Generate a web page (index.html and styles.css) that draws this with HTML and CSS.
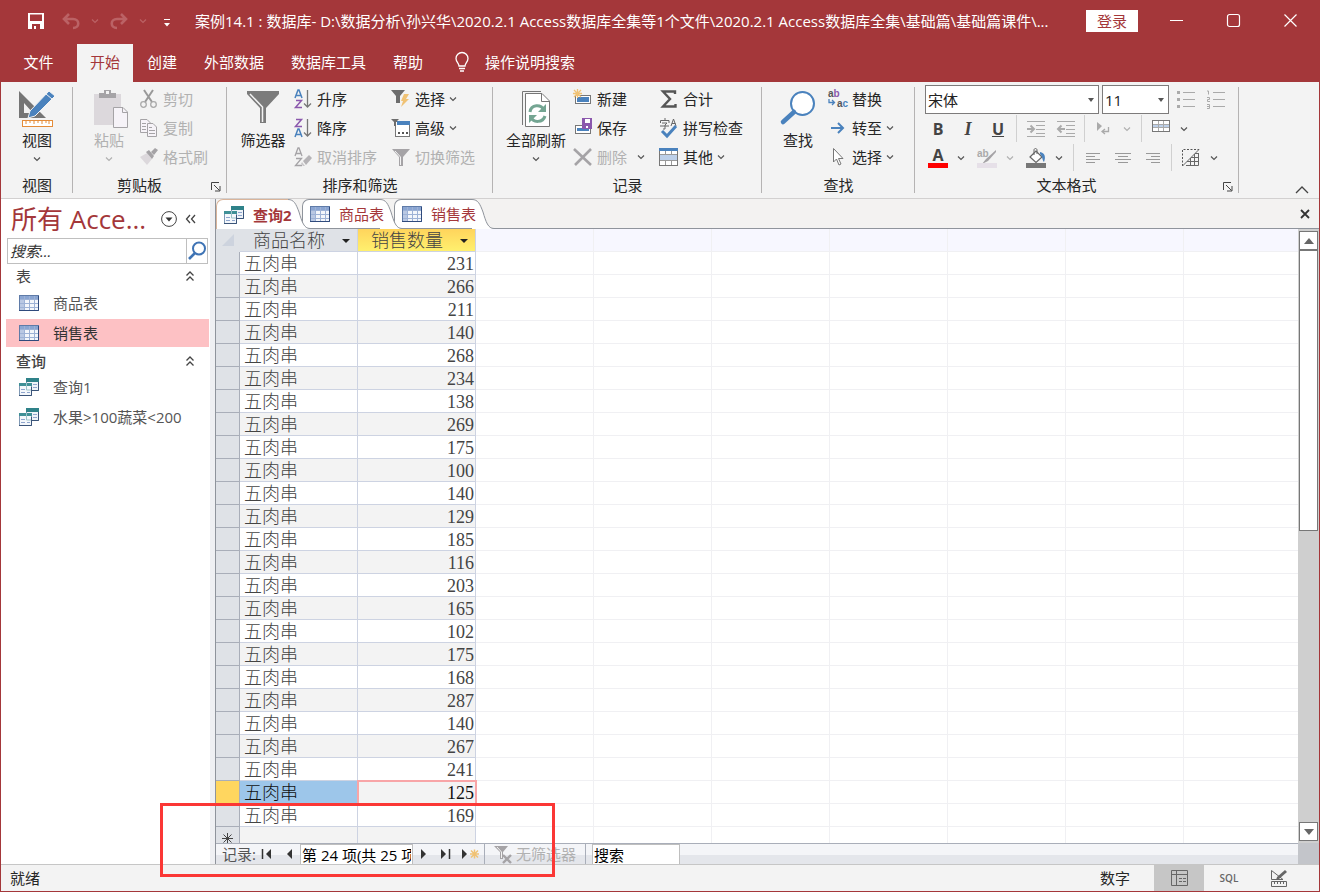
FILE: index.html
```html
<!DOCTYPE html>
<html lang="zh-CN">

<head>
    <meta charset="UTF-8">
    <title>Access</title>
    <link rel="stylesheet" href="styles.css">
</head>

<body>
    <svg class="defs" width="0" height="0">
        <symbol id="chev" viewBox="0 0 8 8">
            <path d="M1 2.5 L4 5.5 L7 2.5" fill="none" stroke="currentColor" stroke-width="1.2" />
        </symbol>
        <symbol id="table" viewBox="0 0 20 16">
            <rect x="0.5" y="0.5" width="19" height="15" fill="#f3f6fb" stroke="#5f7ba8" />
            <rect x="1" y="1" width="18" height="3" fill="#8aa5d2" />
            <path d="M1 4 H5 V15 H1 Z" fill="#b9c8e3" />
            <path d="M1 4.5 H19 M1 8.5 H19 M1 12.5 H19 M5.5 1 V15 M10.5 1 V15 M15.5 1 V15" stroke="#9db2d6" fill="none" />
            <path d="M19.5 1 V15.5 H0" stroke="#2f4a7c" fill="none" />
        </symbol>
        <symbol id="query" viewBox="0 0 20 18">
            <rect x="7.5" y="0.5" width="12" height="12" fill="#eef3f8" stroke="#7f99b5" />
            <rect x="7" y="0" width="13" height="4" fill="#2f8289" />
            <path d="M14 6.5 H18 M14 9.5 H18" stroke="#8ea5cd" />
            <path d="M19.5 4 V12.5 H13" stroke="#3a5479" fill="none" />
            <rect x="0.5" y="5.5" width="12" height="12" fill="#f4f7fb" stroke="#7f99b5" />
            <rect x="0" y="5" width="13" height="3" fill="#3f9096" />
            <path d="M7.5 5 V12 H13" stroke="#9cc4c9" fill="none" />
            <path d="M2 11.5 H6 M2 14.5 H6 M8 14.5 H11" stroke="#8ea5cd" />
            <path d="M12.5 9 V17.5 H0" stroke="#3a5479" fill="none" />
        </symbol>
        <symbol id="up2" viewBox="0 0 10 12">
            <path d="M1.5 5.5 L5 2 L8.5 5.5 M1.5 10.5 L5 7 L8.5 10.5" fill="none" stroke="#444" stroke-width="1.3" />
        </symbol>
        <symbol id="funnel" viewBox="0 0 20 20">
            <path d="M1 2 H19 L12 10 V19 H8 V10 Z" />
            <path d="M4 4 L9.5 10 V18" stroke="#f3f3f3" fill="none" />
        </symbol>
        <symbol id="launch" viewBox="0 0 10 10">
            <path d="M0.5 8 V0.5 H8 M3 3 L8.5 8.5 M9 4 V9 H4" fill="none" stroke="#444" />
        </symbol>
        <symbol id="slope" viewBox="0 0 22 30">
            <path d="M0 0.5 C6 0.5 8 5 11 13 C14 23 16 29.5 22 29.5 V30 H0 Z" fill="#fff" />
            <path d="M0 0.5 C6 0.5 8 5 11 13 C14 23 16 29.5 22 29.5" fill="none" stroke="#8f949c" />
        </symbol>
    </svg>

    <div class="titlebar">
        <button class="qa save" aria-label="保存"><svg width="16" height="16"><path d="M0 0 H16 V16 H0 Z M2 1.5 V8 H14 V1.5 Z M4 11 V16 H6 V13 H8 V16 H12 V11 Z" fill="#fff" fill-rule="evenodd" /></svg></button>
        <button class="qa dim" aria-label="撤消"><svg width="18" height="16"><path d="M7 1 L2 6 L7 11 M2 6 H11 C18 6 18 15 11 15" fill="none" stroke="currentColor" stroke-width="2.6" /></svg></button>
        <button class="qa dim drop" aria-label="撤消列表"><svg width="8" height="8"><use href="#chev" /></svg></button>
        <button class="qa dim" aria-label="恢复"><svg width="18" height="16"><path d="M11 1 L16 6 L11 11 M16 6 H7 C0 6 0 15 7 15" fill="none" stroke="currentColor" stroke-width="2.6" /></svg></button>
        <button class="qa dim drop" aria-label="恢复列表"><svg width="8" height="8"><use href="#chev" /></svg></button>
        <button class="qa more" aria-label="自定义"><svg width="6" height="8"><path d="M0 0.5 H6" stroke="#fff" /><path d="M0 4 H6 L3 7.5 Z" fill="#fff" /></svg></button>
        <div class="caption">案例14.1 : 数据库- D:\数据分析\孙兴华\2020.2.1 Access数据库全集等1个文件\2020.2.1 Access数据库全集\基础篇\基础篇课件\...</div>
        <button class="login">登录</button>
        <button class="win" aria-label="最小化"><svg width="13" height="13"><path d="M0 6.5 H13" stroke="#fff" /></svg></button>
        <button class="win" aria-label="最大化"><svg width="13" height="13"><rect x="0.5" y="0.5" width="12" height="12" rx="2" fill="none" stroke="#fff" stroke-width="1.2" /></svg></button>
        <button class="win" aria-label="关闭"><svg width="13" height="13"><path d="M0.5 0.5 L12.5 12.5 M12.5 0.5 L0.5 12.5" stroke="#fff" stroke-width="1.2" /></svg></button>
    </div>

    <div class="menu">
        <button class="file">文件</button>
        <button class="on">开始</button>
        <button>创建</button>
        <button>外部数据</button>
        <button>数据库工具</button>
        <button>帮助</button>
        <button class="tell"><svg width="14" height="20"><path d="M4 14 C4 11 1 10 1 6.5 A6 6 0 0 1 13 6.5 C13 10 10 11 10 14 Z M4 16.5 H10 M5 19 H9" fill="none" stroke="#fff" stroke-width="1.3" /></svg>操作说明搜索</button>
    </div>

    <div class="ribbon">
        <div class="group first">
            <div class="tools">
                <button class="big"><svg class="pic" width="38" height="38">
                        <path d="M1 1 V28 H28 Z M6 13 V23 H15 Z" fill="#757575" fill-rule="evenodd" />
                        <path d="M31 1 L37 6 L17 26 L10 28 L12 21 Z" fill="#4a82bd" stroke="#f3f3f3" />
                        <path d="M28 4 L34 9" stroke="#f3f3f3" />
                        <rect x="4.5" y="30.5" width="30" height="6" fill="#fff" stroke="#e48c39" />
                        <path d="M8 31 V34 M12 31 V33 M16 31 V34 M20 31 V33 M24 31 V34 M28 31 V33 M31 31 V34" stroke="#e48c39" />
                    </svg><span>视图</span><svg class="chev" width="8" height="8"><use href="#chev" /></svg></button>
            </div>
            <div class="name"><span>视图</span></div>
        </div>

        <div class="group">
            <div class="tools">
                <button class="big" disabled><svg class="pic" width="38" height="38">
                        <path d="M4 4 H31 V35 H4 Z" fill="#dcd8dc" />
                        <path d="M9 3 H14 V0 H21 V3 H26 V8 H9 Z M16 1 V4 H19 V1 Z" fill="#a5a3a6" fill-rule="evenodd" />
                        <path d="M23.5 17.5 H33 L37.5 22 V37.5 H23.5 Z" fill="#f6f3f8" stroke="#a5a3a6" />
                        <path d="M32.5 18 V22.5 H37" fill="none" stroke="#a5a3a6" />
                    </svg><span>粘贴</span><svg class="chev" width="8" height="8"><use href="#chev" /></svg></button>
                <div class="stack">
                    <button class="small" disabled><svg width="20" height="20">
                            <path d="M5 1 L13 13 M14 1 L6 13" stroke="#999" stroke-width="2" />
                            <circle cx="4.5" cy="15.5" r="2.8" fill="none" stroke="#aaa" stroke-width="1.3" />
                            <circle cx="14.5" cy="15.5" r="2.8" fill="none" stroke="#aaa" stroke-width="1.3" />
                        </svg>剪切</button>
                    <button class="small" disabled><svg width="20" height="20">
                            <path d="M1.5 1.5 H8 L11.5 5 V14.5 H1.5 Z" fill="#f6f3f8" stroke="#a5a3a6" />
                            <path d="M8.5 5.5 H14 L17.5 9 V18.5 H8.5 Z" fill="#f6f3f8" stroke="#a5a3a6" />
                            <path d="M3 5.5 H7 M3 8.5 H7 M3 11.5 H7 M10 9.5 H13 M10 12.5 H16 M10 15.5 H16" stroke="#a5a3a6" />
                        </svg>复制</button>
                    <button class="small" disabled><svg width="20" height="20">
                            <path d="M1 10 L8 6 L13 12 L8 18 Z" fill="#dcd8dc" />
                            <path d="M7 5 L10 3 L15 9 L13 12 Z M12 5 L16 1 L19 3 L15 8 Z" fill="#a5a3a6" />
                        </svg>格式刷</button>
                </div>
            </div>
            <div class="name"><span>剪贴板</span><button class="launch" aria-label="剪贴板选项"><svg width="10" height="10"><use href="#launch" /></svg></button></div>
        </div>

        <div class="group">
            <div class="tools">
                <button class="big"><svg class="pic" width="34" height="34">
                        <path d="M1 1 H33 V4 L20 18 V33 H14 V18 L1 4 Z" fill="#7b7b7b" />
                        <path d="M4 4 L16.5 17 V32" fill="none" stroke="#f3f3f3" stroke-width="1.5" />
                    </svg><span>筛选器</span></button>
                <div class="stack">
                    <button class="small"><svg width="20" height="20">
                            <path d="M2 9 L5 1 H6 L9 9 M3 6.5 H8" fill="none" stroke="#4a82bd" stroke-width="1.5" />
                            <path d="M3 11.5 H8.5 L2.5 18.5 H9" fill="none" stroke="#8b58ad" stroke-width="1.5" />
                            <path d="M14.5 1 V18 M11 14.5 L14.5 18 L18 14.5" fill="none" stroke="#777" stroke-width="1.3" />
                        </svg>升序</button>
                    <button class="small"><svg width="20" height="20">
                            <path d="M3 1.5 H8.5 L2.5 8.5 H9" fill="none" stroke="#8b58ad" stroke-width="1.5" />
                            <path d="M2 19 L5 11 H6 L9 19 M3 16.5 H8" fill="none" stroke="#4a82bd" stroke-width="1.5" />
                            <path d="M14.5 1 V18 M11 14.5 L14.5 18 L18 14.5" fill="none" stroke="#777" stroke-width="1.3" />
                        </svg>降序</button>
                    <button class="small" disabled><svg width="20" height="20">
                            <path d="M2 9 L5 1 H6 L9 9 M3 6.5 H8 M3 11.5 H8.5 L2.5 18.5 H9" fill="none" stroke="#a5a3a6" stroke-width="1.3" />
                            <path d="M10 14 L16 8 L19 11 L13 18 Z" fill="#b5b3b6" />
                            <path d="M9 15 L12 19 L10 19 L8 17 Z" fill="#c9c7ca" />
                        </svg>取消排序</button>
                </div>
                <div class="stack">
                    <button class="small"><svg width="20" height="20">
                            <path d="M0 1 H14 L9 7 V14 H5 V7 Z" fill="#6d6d6d" />
                            <path d="M13 5 H18 L15 10 H18 L10 18 L12 12 H10 Z" fill="#f0c274" />
                        </svg>选择<svg class="chev" width="8" height="8"><use href="#chev" /></svg></button>
                    <button class="small"><svg width="20" height="20">
                            <rect x="4.5" y="3.5" width="14" height="15" fill="#fff" stroke="#777" />
                            <rect x="6" y="3" width="13" height="4" fill="#4a82bd" />
                            <path d="M0 1 H8 L5 4 V8 H3 V4 Z" fill="#6d6d6d" />
                            <path d="M7 15 H9 M11 15 H13 M15 15 H17" stroke="#555" stroke-width="2" />
                        </svg>高级<svg class="chev" width="8" height="8"><use href="#chev" /></svg></button>
                    <button class="small" disabled><svg width="20" height="20" fill="#a5a3a6"><use href="#funnel" /></svg>切换筛选</button>
                </div>
            </div>
            <div class="name"><span>排序和筛选</span></div>
        </div>

        <div class="group">
            <div class="tools">
                <button class="big wide"><svg class="pic" width="30" height="38">
                        <path d="M1.5 35 V1.5 H20" fill="none" stroke="#777" />
                        <path d="M4.5 3.5 H21 L28.5 11 V36.5 H4.5 Z" fill="#fff" stroke="#777" />
                        <path d="M20.5 4 V11.5 H28" fill="none" stroke="#777" />
                        <path d="M9 22 C10 14 20 14 23 20 M24 26 C22 33 12 33 10 27" fill="none" stroke="#74a592" stroke-width="3" />
                        <path d="M25 14 V22 H17 Z M8 33 V25 H16 Z" fill="#74a592" />
                    </svg><span>全部刷新</span><svg class="chev" width="8" height="8"><use href="#chev" /></svg></button>
                <div class="stack records">
                    <button class="small"><svg width="20" height="20">
                            <rect x="2.5" y="6.5" width="15" height="8" fill="#fff" stroke="#777" />
                            <rect x="4" y="8" width="12" height="5" fill="#4a82bd" />
                            <path d="M4.5 0 V9 M0 4.5 H9 M1 1 L8 8 M8 1 L1 8" stroke="#f0c274" stroke-width="1.3" />
                        </svg>新建</button>
                    <button class="small"><svg width="20" height="20">
                            <rect x="2.5" y="7.5" width="15" height="8" fill="#fff" stroke="#777" />
                            <rect x="4" y="10" width="12" height="3" fill="#4a82bd" />
                            <path d="M9 0 H19 V11 H9 Z" fill="#8b58ad" />
                            <path d="M12 1 H17 V5 H12 Z M13 8 H15 V10 H13 Z" fill="#fff" />
                        </svg>保存</button>
                    <button class="small" disabled><svg width="20" height="20">
                            <path d="M1 2 L18 18 M18 2 L2 18" stroke="#a5a3a6" stroke-width="2.6" />
                        </svg>删除<svg class="chev dark" width="8" height="8"><use href="#chev" /></svg></button>
                </div>
                <div class="stack">
                    <button class="small"><svg width="20" height="20">
                            <path d="M16 5 V2.5 H4 L11 10 L4 17.5 H16.5 V15" fill="none" stroke="#555" stroke-width="2.4" />
                        </svg>合计</button>
                    <button class="small"><svg width="20" height="20">
                            <path d="M6 0 V2 M1.5 5 V2.5 H10 V5 M3 5 H8 L6 7 V11 H4 M1 8 H10 M12 8 L14.5 1 L17 8 M13 5.5 H16.5" fill="none" stroke="#666" />
                            <path d="M3 13 L8 18 L17 8" fill="none" stroke="#4a82bd" stroke-width="3" />
                        </svg>拼写检查</button>
                    <button class="small"><svg width="20" height="20">
                            <rect x="0.5" y="1.5" width="18" height="17" fill="#fff" stroke="#777" />
                            <rect x="0" y="1" width="19" height="3" fill="#4a82bd" />
                            <rect x="1" y="8" width="17" height="6" fill="#bdd0e9" />
                            <path d="M1 7.5 H18 M1 13.5 H18 M6.5 4 V8 M12.5 4 V8 M6.5 14 V18 M12.5 14 V18" stroke="#999" />
                        </svg>其他<svg class="chev" width="8" height="8"><use href="#chev" /></svg></button>
                </div>
            </div>
            <div class="name"><span>记录</span></div>
        </div>

        <div class="group">
            <div class="tools">
                <button class="big"><svg class="pic" width="36" height="36">
                        <circle cx="22.5" cy="13.5" r="11.5" fill="#fff" stroke="#4a82bd" stroke-width="2" />
                        <path d="M14 22 L3 32" stroke="#4a82bd" stroke-width="4.5" stroke-linecap="round" />
                    </svg><span>查找</span></button>
                <div class="stack">
                    <button class="small"><svg width="20" height="20">
                            <text x="0" y="8" class="abc">a<tspan fill="#8b58ad">b</tspan></text>
                            <text x="9" y="18" class="abc">a<tspan fill="#4a82bd">c</tspan></text>
                            <path d="M1 10 V13.5 H6 M4 11 L6.5 13.5 L4 16" fill="none" stroke="#4a82bd" stroke-width="1.3" />
                        </svg>替换</button>
                    <button class="small"><svg width="20" height="20">
                            <path d="M3 10 H15 M10 5 L15 10 L10 15" fill="none" stroke="#4a82bd" stroke-width="2" />
                        </svg>转至<svg class="chev" width="8" height="8"><use href="#chev" /></svg></button>
                    <button class="small"><svg width="20" height="20">
                            <path d="M5.5 1.5 V15 L8.5 12 L11 18 L13 17 L10.5 11.5 H15 Z" fill="#fff" stroke="#777" />
                        </svg>选择<svg class="chev" width="8" height="8"><use href="#chev" /></svg></button>
                </div>
            </div>
            <div class="name"><span>查找</span></div>
        </div>

        <div class="group format">
            <div class="tools">
                <div class="line fonts">
                    <label class="pick face"><select aria-label="字体"><option>宋体</option></select></label>
                    <label class="pick size"><select aria-label="字号"><option>11</option></select></label>
                    <button class="ic" disabled aria-label="项目符号"><svg width="20" height="20"><path d="M7 2.5 H19 M7 9.5 H19 M7 16.5 H19" stroke="#aaa" /><path d="M1 2.5 H4 M1 9.5 H4 M1 16.5 H4" stroke="#aaa" stroke-width="3" /></svg></button>
                    <button class="ic" disabled aria-label="编号"><svg width="20" height="20"><path d="M7 2.5 H19 M7 9.5 H19 M7 16.5 H19" stroke="#aaa" /><path d="M1 1 H2.5 V4.5 M1 7.5 H3.5 V9.5 H1.5 V11.5 H4 M1 14.5 H3.5 V18.5 H1 M1 16.5 H3" fill="none" stroke="#aaa" /></svg></button>
                </div>
                <div class="line">
                    <button class="ic b">B</button>
                    <button class="ic i">I</button>
                    <button class="ic u">U</button>
                    <i class="sep"></i>
                    <button class="ic" disabled aria-label="增加缩进"><svg width="20" height="20"><path d="M1 2.5 H19 M10 6.5 H19 M10 10.5 H19 M10 14.5 H19 M1 17.5 H19" stroke="#aaa" /><path d="M1 10 H8 M4.5 6.5 L8 10 L4.5 13.5" fill="none" stroke="#aaa" stroke-width="2" /></svg></button>
                    <button class="ic" disabled aria-label="减少缩进"><svg width="20" height="20"><path d="M1 2.5 H19 M10 6.5 H19 M10 10.5 H19 M10 14.5 H19 M1 17.5 H19" stroke="#aaa" /><path d="M2 10 H9 M5.5 6.5 L2 10 L5.5 13.5" fill="none" stroke="#aaa" stroke-width="2" /></svg></button>
                    <i class="sep"></i>
                    <button class="ic" disabled aria-label="文字方向"><svg width="20" height="20"><path d="M3 3 L8 7 L3 12 Z" fill="#aaa" /><path d="M14.5 8 V12.5 H8 M11 10 L8 12.5 L11 15" fill="none" stroke="#aaa" stroke-width="1.3" /></svg></button>
                    <button class="dd" disabled aria-label="文字方向列表"><svg width="8" height="8"><use href="#chev" /></svg></button>
                    <i class="sep"></i>
                    <button class="ic" aria-label="网格线"><svg width="20" height="20"><rect x="1.5" y="1.5" width="17" height="11" fill="#fff" stroke="#777" /><rect x="2" y="5" width="16" height="4" fill="#bdd0e9" /><path d="M2 5.5 H18 M2 8.5 H18 M7.5 2 V12 M12.5 2 V12" stroke="#aaa" /></svg></button>
                    <button class="dd" aria-label="网格线列表"><svg width="8" height="8"><use href="#chev" /></svg></button>
                </div>
                <div class="line">
                    <button class="ic color">A</button>
                    <button class="dd" aria-label="字体颜色列表"><svg width="8" height="8"><use href="#chev" /></svg></button>
                    <button class="ic" disabled aria-label="突出显示"><svg width="20" height="20"><text x="0" y="9" class="abc pale">ab</text><path d="M19 2 L9 11 L5 16 L11 13 L19 4 Z" fill="#a5a3a6" /><rect x="0" y="15" width="20" height="5" fill="#e6e0e8" /></svg></button>
                    <button class="dd" disabled aria-label="突出显示列表"><svg width="8" height="8"><use href="#chev" /></svg></button>
                    <button class="ic" aria-label="背景色"><svg width="20" height="20"><path d="M4 9 L10 3 L16 9 L10 14.5 Z" fill="#fff" stroke="#666" stroke-width="1.2" /><path d="M8 7 V2 C8 0 11 0 11 2 V6" fill="none" stroke="#666" /><path d="M14 4 C19 5 20 9 18 14 C16 12 17 9 14 6 Z" fill="#4a82bd" /><rect x="0" y="15" width="20" height="5" fill="#777" /></svg></button>
                    <button class="dd" aria-label="背景色列表"><svg width="8" height="8"><use href="#chev" /></svg></button>
                    <i class="sep"></i>
                    <button class="ic" disabled aria-label="左对齐"><svg width="14" height="12"><path d="M0 1.5 H14 M0 4.5 H9 M0 7.5 H14 M0 10.5 H9" stroke="#999" /></svg></button>
                    <button class="ic" disabled aria-label="居中"><svg width="16" height="12"><path d="M0 1.5 H16 M3 4.5 H13 M0 7.5 H16 M3 10.5 H13" stroke="#999" /></svg></button>
                    <button class="ic" disabled aria-label="右对齐"><svg width="14" height="12"><path d="M0 1.5 H14 M5 4.5 H14 M0 7.5 H14 M5 10.5 H14" stroke="#999" /></svg></button>
                    <i class="sep"></i>
                    <button class="ic" aria-label="可选行颜色"><svg width="20" height="20"><path d="M1.5 18 V1.5 H18" fill="none" stroke="#555" stroke-dasharray="2 1.5" /><path d="M1.5 18 L18 1.5" stroke="#666" /><path d="M17.5 5 V17.5 H5 M13.5 6 V17 M9.5 10 V17 M14 5.5 H17 M10 9.5 H17 M6 13.5 H17" fill="none" stroke="#666" /></svg></button>
                    <button class="dd" aria-label="可选行颜色列表"><svg width="8" height="8"><use href="#chev" /></svg></button>
                </div>
            </div>
            <div class="name"><span>文本格式</span><button class="launch" aria-label="文本格式选项"><svg width="10" height="10"><use href="#launch" /></svg></button></div>
        </div>
        <button class="fold" aria-label="折叠功能区"><svg width="14" height="8"><path d="M1 7 L7 1 L13 7" fill="none" stroke="#444" stroke-width="1.3" /></svg></button>
    </div>

    <div class="main">
        <div class="nav">
            <div class="nav_head">
                <h1>所有 Acce...</h1>
                <button aria-label="选择类别"><svg width="16" height="16"><circle cx="8" cy="8" r="7.4" fill="#fff" stroke="#444" /><path d="M4.5 6.5 H11.5 L8 10.5 Z" fill="#333" /></svg></button>
                <button aria-label="收起"><svg width="12" height="10"><path d="M5 1 L1.5 5 L5 9 M10 1 L6.5 5 L10 9" fill="none" stroke="#444" stroke-width="1.3" /></svg></button>
            </div>
            <div class="find">
                <input type="text" placeholder="搜索..." aria-label="搜索对象">
                <button aria-label="搜索"><svg width="20" height="20"><circle cx="12" cy="7.5" r="6" fill="#fff" stroke="#3f74b5" stroke-width="2" /><path d="M8 12 L2 18" stroke="#3f74b5" stroke-width="2.6" /></svg></button>
            </div>
            <button class="cat">表<svg width="10" height="12"><use href="#up2" /></svg></button>
            <a class="item" href="#"><svg width="20" height="16"><use href="#table" /></svg>商品表</a>
            <a class="item on" href="#"><svg width="20" height="16"><use href="#table" /></svg>销售表</a>
            <button class="cat bold">查询<svg width="10" height="12"><use href="#up2" /></svg></button>
            <a class="item" href="#"><svg width="20" height="18"><use href="#query" /></svg>查询1</a>
            <a class="item" href="#"><svg width="20" height="18"><use href="#query" /></svg>水果&gt;100蔬菜&lt;200</a>
        </div>

        <div class="doc">
            <div class="tabs">
                <button class="tab on"><span><svg width="20" height="18"><use href="#query" /></svg>查询2</span><svg class="slope" width="22" height="30"><use href="#slope" /></svg></button>
                <button class="tab"><span><svg width="20" height="16"><use href="#table" /></svg>商品表</span><svg class="slope" width="22" height="30"><use href="#slope" /></svg></button>
                <button class="tab"><span><svg width="20" height="16"><use href="#table" /></svg>销售表</span><svg class="slope" width="22" height="30"><use href="#slope" /></svg></button>
                <button class="shut" aria-label="关闭查询"><svg width="10" height="10"><path d="M1 1 L9 9 M9 1 L1 9" stroke="#333" stroke-width="1.8" /></svg></button>
            </div>
            <div class="view">
                <div class="sheet">
                    <table>
                        <thead>
                            <tr>
                                <th class="all"><svg width="12" height="12"><path d="M12 0 V12 H0 Z" fill="#cdd3de" /></svg></th>
                                <th><div>商品名称<button aria-label="筛选商品名称"></button></div></th>
                                <th class="sel"><div>销售数量<button aria-label="筛选销售数量"></button></div></th>
                            </tr>
                        </thead>
                        <tbody>
                            <tr><th></th><td>五肉串</td><td>231</td></tr>
                            <tr><th></th><td>五肉串</td><td>266</td></tr>
                            <tr><th></th><td>五肉串</td><td>211</td></tr>
                            <tr><th></th><td>五肉串</td><td>140</td></tr>
                            <tr><th></th><td>五肉串</td><td>268</td></tr>
                            <tr><th></th><td>五肉串</td><td>234</td></tr>
                            <tr><th></th><td>五肉串</td><td>138</td></tr>
                            <tr><th></th><td>五肉串</td><td>269</td></tr>
                            <tr><th></th><td>五肉串</td><td>175</td></tr>
                            <tr><th></th><td>五肉串</td><td>100</td></tr>
                            <tr><th></th><td>五肉串</td><td>140</td></tr>
                            <tr><th></th><td>五肉串</td><td>129</td></tr>
                            <tr><th></th><td>五肉串</td><td>185</td></tr>
                            <tr><th></th><td>五肉串</td><td>116</td></tr>
                            <tr><th></th><td>五肉串</td><td>203</td></tr>
                            <tr><th></th><td>五肉串</td><td>165</td></tr>
                            <tr><th></th><td>五肉串</td><td>102</td></tr>
                            <tr><th></th><td>五肉串</td><td>175</td></tr>
                            <tr><th></th><td>五肉串</td><td>168</td></tr>
                            <tr><th></th><td>五肉串</td><td>287</td></tr>
                            <tr><th></th><td>五肉串</td><td>140</td></tr>
                            <tr><th></th><td>五肉串</td><td>267</td></tr>
                            <tr><th></th><td>五肉串</td><td>241</td></tr>
                            <tr class="now"><th></th><td>五肉串</td><td>125</td></tr>
                            <tr><th></th><td>五肉串</td><td>169</td></tr>
                            <tr><th><svg width="11" height="11"><path d="M5.5 0 V11 M0 5.5 H11 M1.5 1.5 L9.5 9.5 M9.5 1.5 L1.5 9.5" stroke="#444" /></svg></th><td></td><td></td></tr>
                        </tbody>
                    </table>
                </div>
                <div class="scroll">
                    <button aria-label="向上"><svg width="10" height="6"><path d="M0 6 L5 0 L10 6 Z" fill="#666" /></svg></button>
                    <div class="thumb"></div>
                    <button class="down" aria-label="向下"><svg width="10" height="6"><path d="M0 0 L5 6 L10 0 Z" fill="#666" /></svg></button>
                </div>
            </div>
            <div class="bar">
                <div class="recs">
                    <label for="rec">记录:</label>
                    <button class="go" aria-label="第一条"><svg width="10" height="10"><path d="M0.5 0 V10" stroke="#333" stroke-width="1.5" /><path d="M9 0 V10 L4 5 Z" fill="#333" /></svg></button>
                    <button class="go" aria-label="上一条"><svg width="6" height="10"><path d="M6 0 V10 L1 5 Z" fill="#333" /></svg></button>
                    <input id="rec" class="rec" type="text" value="第 24 项(共 25 项)">
                    <button class="go" aria-label="下一条"><svg width="6" height="10"><path d="M0 0 V10 L5 5 Z" fill="#333" /></svg></button>
                    <button class="go" aria-label="最后一条"><svg width="10" height="10"><path d="M0 0 V10 L5 5 Z" fill="#333" /><path d="M8.5 0 V10" stroke="#333" stroke-width="1.5" /></svg></button>
                    <button class="go new" aria-label="新记录"><svg width="18" height="10"><path d="M0 0 V10 L5 5 Z" fill="#333" /><path d="M12.5 0.5 V9.5 M8 5 H17 M9 1.5 L16 8.5 M16 1.5 L9 8.5" stroke="#f0c274" stroke-width="1.5" /></svg></button>
                    <button class="nofilter" disabled><svg width="20" height="18"><path d="M0 1 H14 L9 7 V14 H6 V7 Z" fill="#a5a3a6" /><path d="M3 2 L7.5 7 V13" fill="none" stroke="#f3f3f3" /><path d="M9 10 L17 18 M17 10 L9 18" stroke="#a5a3a6" stroke-width="2.4" /></svg>无筛选器</button>
                    <input class="seek" type="text" value="搜索" aria-label="搜索记录">
                </div>
                <div class="corner"></div>
            </div>
        </div>
    </div>

    <div class="status">
        <span>就绪</span>
        <span class="num">数字</span>
        <button class="on" aria-label="数据表视图"><svg width="17" height="16"><path d="M0.5 0.5 H16.5 V15.5 H0.5 Z M0.5 4.5 H16.5 M5.5 0.5 V15.5 M8 8.5 H11 M12 8.5 H15 M8 11.5 H11 M12 11.5 H15" fill="none" stroke="#666" /></svg></button>
        <button class="sql">SQL</button>
        <button aria-label="设计视图"><svg width="18" height="17"><path d="M1.5 0.5 V9.5 H13 L1.5 0.5" fill="none" stroke="#666" /><path d="M15 0 L17 2 L9 9 L6 10 L7 7 Z" fill="#666" /><path d="M1.5 11.5 H16.5 V16.5 H1.5 Z M4.5 12 V14 M7.5 12 V14 M10.5 12 V14 M13.5 12 V14" fill="none" stroke="#666" /></svg></button>
    </div>

    <div class="mark"></div>
</body>

</html>
```
FILE: styles.css
```css
* {
    box-sizing: border-box;
}

body {
    margin: 0;
    height: 100vh;
    display: flex;
    flex-direction: column;
    position: relative;
    overflow: hidden;
    border: 1px solid #a4373a;
    border-top: 0;
    background: #f3f3f3;
    color: #262626;
    font: 15px/20px "Open Sans", "Noto Sans CJK SC", sans-serif;
}

button {
    margin: 0;
    padding: 0;
    border: 0;
    background: none;
    color: inherit;
    font: inherit;
    white-space: nowrap;
}

button:disabled {
    color: #b1b1b1;
}

svg {
    display: block;
    flex: none;
    overflow: visible;
}

.defs {
    position: absolute;
}

/* title */
.titlebar {
    display: flex;
    align-items: center;
    height: 44px;
    padding-bottom: 3px;
    background: #a4373a;
    color: #fff;
}

.qa {
    display: flex;
    justify-content: center;
    width: 28px;
}

.save {
    width: 70px;
    margin-right: -14px;
}

.dim {
    color: #bb6265;
}

.drop {
    width: 20px;
}

.more {
    width: 28px;
    padding-top: 4px;
}

.caption {
    flex: 1;
    min-width: 0;
    margin: 0 14px;
    overflow: hidden;
    white-space: nowrap;
}

.login {
    width: 52px;
    height: 22px;
    margin-right: 10px;
    background: #fff;
    color: #a4373a;
}

.win {
    display: flex;
    justify-content: center;
    width: 57px;
}

.menu {
    display: flex;
    gap: 1px;
    height: 38px;
    background: #a4373a;
    color: #fff;
}

.menu button {
    padding: 0 13px 2px;
}

.menu .file {
    width: 75px;
}

.menu .on {
    background: #f3f3f3;
    color: #a4373a;
}

.menu .tell {
    display: flex;
    align-items: center;
    gap: 16px;
    padding-left: 18px;
}

/* ribbon */
.ribbon {
    display: grid;
    grid-template-columns: 72px 154px 266px 269px 153px 324px 1fr;
    height: 117px;
    border-bottom: 1px solid #d2d0d0;
}

.group {
    background: linear-gradient(#b5b3b3, #b5b3b3) right 5px / 1px 106px no-repeat;
}

.tools {
    display: flex;
    height: 90px;
    padding: 2px 0 0 6px;
}

.big {
    display: flex;
    flex-direction: column;
    align-items: center;
    width: 60px;
}

.first .tools {
    padding-left: 0;
}

.first .big {
    width: 72px;
}

.wide {
    width: 74px;
}

.big .pic {
    margin: 6px 0 2px;
    height: 38px;
}

.big .chev {
    margin-top: 5px;
}

.chev {
    color: #555;
}

button:disabled .chev {
    color: #b1b1b1;
}

.stack {
    display: flex;
    flex-direction: column;
    margin-right: 14px;
}

.records {
    width: 72px;
}

.small {
    display: flex;
    align-items: center;
    gap: 4px;
    height: 29px;
}

button:disabled .dark {
    margin-left: auto;
    color: #555;
}

.abc {
    font: bold 10px "Liberation Sans", sans-serif;
    fill: #555;
}

.pale {
    fill: #aaa;
}

.name {
    display: flex;
    height: 26px;
    align-items: center;
    text-align: center;
}

.name span {
    flex: 1;
}

.launch {
    width: 21px;
    display: flex;
    padding: 3px 0 0 5px;
}

.format .tools {
    flex-direction: column;
    padding: 3px 0 0 8px;
}

.line {
    display: flex;
    align-items: center;
    height: 29px;
}

.fonts {
    gap: 3px;
    padding-left: 2px;
}

.fonts .ic {
    width: 27px;
}

.ic {
    display: flex;
    justify-content: center;
    align-items: center;
    width: 30px;
    height: 26px;
    color: #444;
    font-size: 16px;
}

.b {
    font-weight: bold;
}

.i {
    font-family: "Liberation Serif", serif;
    font-style: italic;
    font-weight: bold;
    font-size: 18px;
}

.u {
    font-weight: bold;
    text-decoration: underline;
}

.color {
    width: 20px;
    height: 20px;
    margin: 0 5px;
    border-bottom: 5px solid #f00;
    font-weight: bold;
    line-height: 15px;
}

.dd {
    width: 19px;
    padding-left: 4px;
    color: #555;
}

.sep {
    width: 1px;
    height: 27px;
    margin: 0 4px 0 3px;
    background: #d0d0d0;
}

.pick {
    position: relative;
    height: 29px;
}

.pick::after {
    content: "";
    position: absolute;
    right: 5px;
    top: 13px;
    border: 3px solid transparent;
    border-top: 4px solid #555;
    border-bottom: 0;
    pointer-events: none;
}

.face {
    width: 174px;
}

.size {
    width: 67px;
}

.pick select {
    width: 100%;
    height: 29px;
    padding: 0 2px;
    border: 1px solid #7d7b7b;
    background: #fff;
    color: #222;
    font: inherit;
    appearance: none;
}

.fold {
    display: flex;
    justify-content: flex-end;
    align-items: flex-end;
    padding: 0 10px 4px 0;
}

/* navigation pane */
.main {
    flex: 1;
    min-height: 0;
    display: flex;
    background: #fff;
}

.nav {
    width: 215px;
    flex: none;
    border-right: 1px solid #8f949c;
    background: linear-gradient(#eff0f3, #eff0f3) right / 5px 100% no-repeat;
    padding: 0 6px 0 5px;
}

.nav_head {
    display: flex;
    align-items: center;
    height: 39px;
    padding-left: 5px;
}

.nav_head h1 {
    flex: none;
    width: 150px;
    margin: 0;
    color: #a4373a;
    font-weight: normal;
    font-size: 26px;
    line-height: 36px;
    white-space: nowrap;
}

.nav_head button {
    width: 27px;
}

.find {
    display: flex;
    height: 26px;
    margin: 0 1px;
    border: 1px solid #bfbfbf;
}

.find input {
    flex: 1;
    min-width: 0;
    padding: 0 2px;
    border: 0;
    font: inherit;
    font-style: italic;
}

.find input::placeholder {
    color: #333;
}

.find button {
    width: 21px;
    border-left: 1px solid #bfbfbf;
}

.cat {
    display: flex;
    justify-content: space-between;
    align-items: center;
    width: 100%;
    height: 24px;
    padding: 0 14px 0 10px;
    color: #444;
}

.bold {
    height: 23px;
    font-weight: 500;
}

.item {
    display: flex;
    align-items: center;
    gap: 14px;
    height: 28px;
    margin: 1px 0 2px;
    padding-left: 13px;
    color: #555;
    text-decoration: none;
    white-space: nowrap;
}

.item.on {
    background: #fdc1c4;
    color: #333;
}

/* document */
.doc {
    flex: 1;
    min-width: 0;
    display: flex;
    flex-direction: column;
}

.tabs {
    display: flex;
    height: 30px;
    background: linear-gradient(#8f949c, #8f949c) bottom / 100% 1px no-repeat #f3f2f1;
}

.tab {
    display: flex;
    position: relative;
    z-index: 1;
    color: #a4373a;
}

.tab + .tab {
    margin-left: -8px;
}

.tab:nth-child(3) {
    z-index: 0;
}

.tab.on {
    z-index: 2;
    font-weight: bold;
}

.tab span {
    display: flex;
    align-items: center;
    gap: 9px;
    height: 29px;
    width: 78px;
    padding-left: 7px;
    border: 1px solid #8f949c;
    border-width: 1px 0 0 1px;
    border-radius: 7px 0 0 0;
    background: #fff;
}

.tab.on span {
    width: 72px;
    height: 30px;
    border-color: #d9b49a;
}

.slope {
    position: relative;
    z-index: -1;
}

.shut {
    margin-left: auto;
    padding-right: 9px;
}

.view {
    flex: 1;
    min-height: 0;
    display: flex;
}

.sheet {
    flex: 1;
    min-width: 0;
    overflow: hidden;
    background:
        linear-gradient(90deg, transparent 117px, #f0f0f3 117px) 24px 0 / 118px 23px,
        linear-gradient(transparent 22px, #f0f0f3 22px) 0 0 / 118px 23px,
        linear-gradient(#f7f7ff, #f7f7ff) 0 0 / 100% 22px no-repeat #fff;
}

table {
    table-layout: fixed;
    width: 260px;
    border-collapse: separate;
    border-spacing: 0;
    color: #444;
    font: 18px/20px "Liberation Serif", "Noto Sans CJK SC", serif;
}

th,
td {
    height: 23px;
    padding: 0;
    border: 1px solid #cdd3e2;
    border-width: 0 1px 1px 0;
    font-weight: 300;
    overflow: hidden;
}

th {
    width: 118px;
    background: #dfe2e7;
}

th:first-child {
    width: 24px;
    border-color: #a9aeb9;
}

th.all {
    border-color: #dfe2e7;
}

th svg {
    margin: 0 auto;
}

th div {
    display: flex;
    justify-content: space-between;
    align-items: center;
    height: 22px;
    padding: 1px 7px 0 13px;
}

th div button {
    border: 4px solid transparent;
    border-top: 4px solid #222;
    border-bottom: 0;
}

th.sel {
    background: linear-gradient(#ffd45c, #fff06e);
}

td {
    padding: 2px 1px 0 4px;
    background: #fff;
}

td:last-child {
    text-align: right;
}

tr:nth-child(even) td {
    background: #f3f3f3;
}

.now th {
    background: #ffd65f;
}

tr.now td {
    color: #111;
}

tr.now td:nth-child(2) {
    background: #9dc6ea;
}

tr.now td:last-child {
    outline: 2px solid #f8a5a7;
    outline-offset: -1px;
}

.scroll {
    display: flex;
    flex-direction: column;
    width: 21px;
    padding: 2px 1px;
    background: #cfcfcf;
}

.scroll button {
    display: flex;
    justify-content: center;
    align-items: center;
    height: 19px;
    border: 1px solid #777;
    background: #fff;
}

.thumb {
    height: 46%;
    border: 1px solid #777;
    background: #fff;
}

.scroll .down {
    margin-top: auto;
}

.bar {
    display: flex;
    height: 21px;
}

.recs {
    flex: 1;
    display: flex;
    align-items: center;
    border-top: 1px solid #a9aeb9;
    background: linear-gradient(#f4f5f8 11px, #e4e6eb 11px);
}

.recs label {
    flex: none;
    width: 40px;
    padding-left: 6px;
    color: #555;
    white-space: nowrap;
}

.go {
    display: flex;
    justify-content: center;
    width: 22px;
}

.recs input {
    height: 20px;
    padding: 0 1px;
    border: 1px solid #bfbfbf;
    border-bottom: 0;
    font: inherit;
    color: #000;
}

.rec {
    width: 113px;
}

.new {
    width: 27px;
}

.nofilter {
    display: flex;
    align-items: center;
    gap: 2px;
    height: 20px;
    padding: 0 9px;
    margin-right: 6px;
    border: 1px solid #a9aeb9;
    border-width: 0 1px;
}

.seek {
    width: 88px;
}

.corner {
    width: 21px;
    background: #c3c5ca;
}

/* status */
.status {
    display: flex;
    align-items: center;
    height: 27px;
    padding: 0 15px 0 9px;
    border-top: 1px solid #c6c6c6;
    background: #f3f3f3;
}

.num {
    margin: 0 24px 0 auto;
}

.status button {
    display: flex;
    justify-content: center;
    align-items: center;
    width: 50px;
    height: 26px;
}

.status .on {
    background: #c6c6c6;
}

.status .sql {
    color: #666;
    font-size: 10px;
    font-weight: 600;
}

/* highlighted area */
.mark {
    position: absolute;
    left: 159px;
    bottom: 14px;
    width: 395px;
    height: 74px;
    border: 3px solid #fb3735;
    pointer-events: none;
}
```
